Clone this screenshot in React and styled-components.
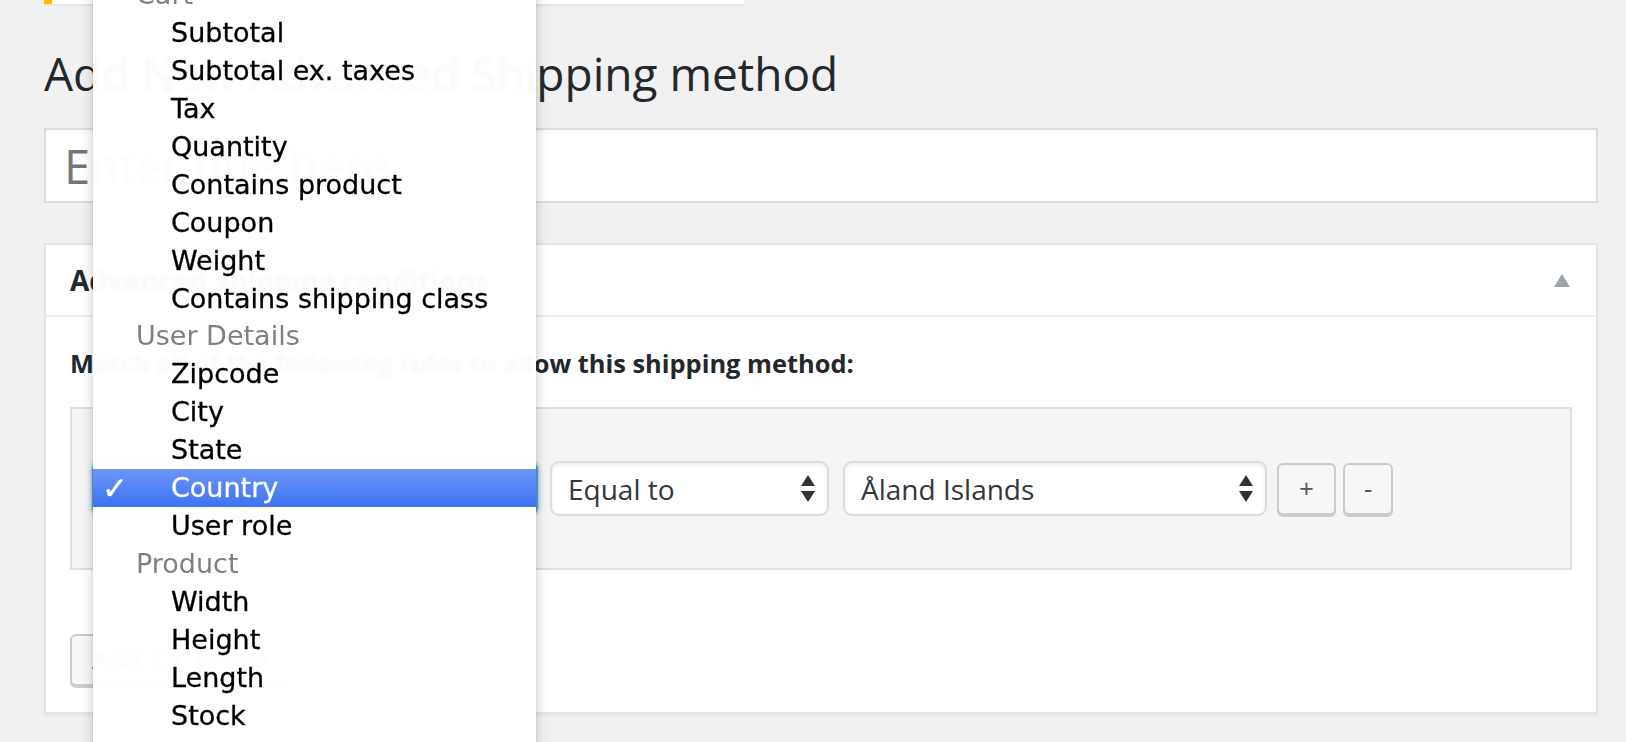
import React from "react";
import styled, { createGlobalStyle } from "styled-components";

const Global = createGlobalStyle`
  html, body { margin: 0; padding: 0; overflow: hidden; }
  body { background: #f1f1f1; font-family: "Open Sans", "Liberation Sans", sans-serif; color: #23282d; }
`;

const Page = styled.div`
  position: relative;
  height: 742px;
  overflow: hidden;
  padding: 0 28px 0 44px;
  box-sizing: border-box;
`;

const NoticeEdge = styled.div`
  width: 692px;
  height: 4px;
  background: #fff;
  border-left: 8px solid #ffb900;
  box-shadow: 0 2px 2px rgba(0, 0, 0, 0.05);
`;

const Heading = styled.h1`
  margin: 39px 0 25px;
  font-size: 46px;
  line-height: 60px;
  font-weight: 400;
  color: #23282d;
`;

const TitleInput = styled.input`
  display: block;
  width: 100%;
  height: 75px;
  box-sizing: border-box;
  border: 2px solid #ddd;
  background: #fff;
  padding: 0 16px 0 18px;
  font-family: "Open Sans", sans-serif;
  font-size: 47px;
  color: #32373c;
  outline: none;
  box-shadow: inset 0 2px 4px rgba(0, 0, 0, 0.04);
  &::placeholder { color: #72777c; }
`;

const Panel = styled.div`
  margin-top: 40px;
  background: #fff;
  border: 2px solid #e5e5e5;
  box-shadow: 0 2px 2px rgba(0, 0, 0, 0.04);
`;

const PanelHeader = styled.div`
  height: 70px;
  display: flex;
  align-items: center;
  justify-content: space-between;
  padding: 0 26px 0 24px;
  border-bottom: 2px solid #eee;
`;

const PanelTitle = styled.h2`
  margin: 0;
  font-size: 28px;
  font-weight: 700;
  color: #23282d;
`;

const PanelBody = styled.div`
  padding: 28px 24px 26px;
`;

const Intro = styled.p`
  margin: 0 0 26px;
  font-size: 25.4px;
  line-height: 36px;
  font-weight: 700;
  color: #23282d;
`;

const Group = styled.div`
  height: 159px;
  background: #f5f5f5;
  border: 2px solid #dfdfdf;
  display: flex;
  align-items: center;
  gap: 12px;
  padding: 0 20px;
`;

const Select = styled.div`
  position: relative;
  width: ${(p) => p.$w}px;
  height: 55px;
  margin-left: ${(p) => p.$ml || 0}px;
  box-sizing: border-box;
  border: 2px solid ${(p) => (p.$focus ? "#5b9dd9" : "#ddd")};
  border-radius: 9px;
  background: #fff;
  box-shadow: ${(p) =>
    p.$focus ? "0 0 4px rgba(30, 140, 190, 0.8)" : "inset 0 2px 4px rgba(0, 0, 0, 0.07)"};
  display: flex;
  align-items: center;
  justify-content: space-between;
  padding: 0 12px 0 16px;
  font-size: 28px;
  color: #32373c;
`;

const Arrows = () => (
  <svg width="14" height="27" viewBox="0 0 14 27">
    <polygon points="7,0 14,11 0,11" fill="#333" />
    <polygon points="0,16 14,16 7,27" fill="#333" />
  </svg>
);

const Button = styled.button`
  height: 52px;
  box-sizing: border-box;
  padding: 0 ${(p) => p.$px || 20}px 2px;
  margin-left: ${(p) => p.$ml || 0}px;
  background: #f7f7f7;
  border: 2px solid #ccc;
  border-radius: 6px;
  box-shadow: 0 2px 0 #ccc;
  font-family: "Open Sans", sans-serif;
  font-size: 26px;
  color: #555;
  display: inline-flex;
  align-items: center;
  justify-content: center;
`;

const AddGroup = styled(Button)`
  margin-top: 64px;
  padding: 0 20px 2px;
`;

const Toggle = () => (
  <svg width="16" height="13" viewBox="0 0 16 13">
    <polygon points="8,0 16,13 0,13" fill="#a0a5aa" />
  </svg>
);

const Menu = styled.div`
  position: absolute;
  left: 93px;
  top: -24px;
  width: 443px;
  height: 800px;
  background: rgba(255, 255, 255, 0.965);
  backdrop-filter: blur(2px);
  box-shadow: 0 0 12px rgba(0, 0, 0, 0.22), 0 0 1px rgba(0, 0, 0, 0.2);
  font-family: "DejaVu Sans", "Liberation Sans", sans-serif;
  font-size: 27px;
`;

const Row = styled.div`
  position: relative;
  height: 37.95px;
  line-height: 38px;
  padding-left: ${(p) => (p.$label ? 43 : 78)}px;
  color: ${(p) => (p.$label ? "#808080" : p.$active ? "#fff" : "#000")};
  -webkit-text-stroke: ${(p) => (p.$label ? "0" : "0.3px")} currentColor;
  background: ${(p) =>
    p.$active ? "linear-gradient(to bottom, #6c95f6 0%, #3d73f2 100%)" : "transparent"};
  white-space: nowrap;
`;

const Check = styled.span`
  position: absolute;
  left: 9px;
  top: 0;
  font-size: 31px;
  font-weight: 700;
  color: #fff;
`;

const groups = [
  { label: "Cart", items: ["Subtotal", "Subtotal ex. taxes", "Tax", "Quantity", "Contains product", "Coupon", "Weight", "Contains shipping class"] },
  { label: "User Details", items: ["Zipcode", "City", "State", "Country", "User role"] },
  { label: "Product", items: ["Width", "Height", "Length", "Stock", "Stock status", "Category"] },
];

export default function App() {
  return (
    <>
      <Global />
      <Page>
        <NoticeEdge />
        <Heading>Add New Advanced Shipping method</Heading>
        <TitleInput placeholder="Enter title here" readOnly />
        <Panel>
          <PanelHeader>
            <PanelTitle>Advanced Shipping conditions</PanelTitle>
            <Toggle />
          </PanelHeader>
          <PanelBody>
            <Intro>Match all of the following rules to allow this shipping method:</Intro>
            <Group>
              <Select $w={446} $focus>
                <span>Country</span>
                <Arrows />
              </Select>
              <Select $w={279}>
                <span>Equal to</span>
                <Arrows />
              </Select>
              <Select $w={424} $ml={2}>
                <span>Åland Islands</span>
                <Arrows />
              </Select>
              <Button $ml={-2}>+</Button>
              <Button $px={19} $ml={-5}>-</Button>
            </Group>
            <AddGroup>Add 'Or' group</AddGroup>
          </PanelBody>
        </Panel>
        <Menu>
          {groups.map((g) => (
            <React.Fragment key={g.label}>
              <Row $label>{g.label}</Row>
              {g.items.map((it) => (
                <Row key={it} $active={it === "Country"}>
                  {it === "Country" && <Check>✓</Check>}
                  {it}
                </Row>
              ))}
            </React.Fragment>
          ))}
        </Menu>
      </Page>
    </>
  );
}
